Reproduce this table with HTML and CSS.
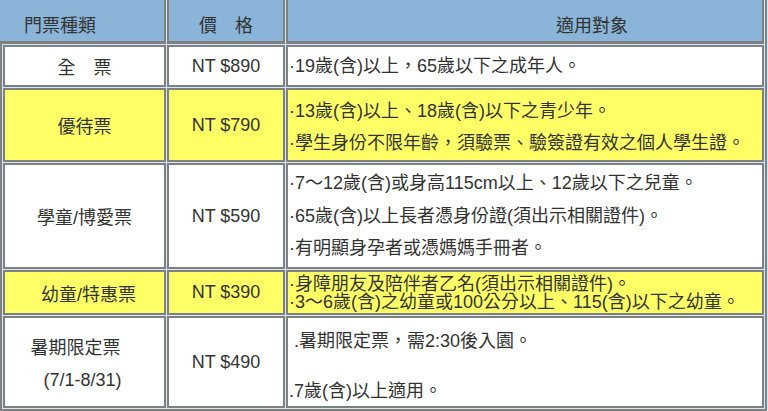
FILE: index.html
```html
<!DOCTYPE html>
<html lang="zh-Hant">
<head>
<meta charset="utf-8">
<title>門票種類</title>
<link rel="stylesheet" href="styles.css">
</head>
<body>
<div class="sheet">
  <div class="head">
    <div class="hc hc1">門票種類</div>
    <div class="hc hc2">價　格</div>
    <div class="hc hc3">適用對象</div>
  </div>
  <div class="rows">
    <div class="c c1">全　票</div>
    <div class="c c2">NT $890</div>
    <div class="c c3 r1"><div>·19歲(含)以上，65歲以下之成年人。</div></div>

    <div class="c c1 y">優待票</div>
    <div class="c c2 y">NT $790</div>
    <div class="c c3 y r2">
      <div>·13歲(含)以上、18歲(含)以下之青少年。</div>
      <div>·學生身份不限年齡，須驗票、驗簽證有效之個人學生證。</div>
    </div>

    <div class="c c1">學童/博愛票</div>
    <div class="c c2">NT $590</div>
    <div class="c c3 r3">
      <div>·7～12歲(含)或身高115cm以上、12歲以下之兒童。</div>
      <div>·65歲(含)以上長者憑身份證(須出示相關證件)。</div>
      <div>·有明顯身孕者或憑媽媽手冊者。</div>
    </div>

    <div class="c c1 y shift-r">幼童/特惠票</div>
    <div class="c c2 y">NT $390</div>
    <div class="c c3 y r4">
      <div>·身障朋友及陪伴者乙名(須出示相關證件)。</div>
      <div>·3～6歲(含)之幼童或100公分以上、115(含)以下之幼童。</div>
    </div>

    <div class="c c1 r5a">
      <div class="l-a">暑期限定票</div>
      <div class="l-b">(7/1-8/31)</div>
    </div>
    <div class="c c2">NT $490</div>
    <div class="c c3 r5">
      <div class="pre"> .暑期限定票，需2:30後入園。</div>
      <div>&nbsp;</div>
      <div>.7歲(含)以上適用。</div>
    </div>
  </div>
</div>
</body>
</html>
```
FILE: styles.css
```css
html, body {
  margin: 0;
  padding: 0;
}
body {
  background: #d2e9f9;
  font-family: "Liberation Sans", "Noto Sans CJK TC", sans-serif;
  font-size: 18px;
  color: #333333;
  overflow: hidden;
}
.sheet {
  width: 767px;
  height: 411px;
  box-sizing: border-box;
  border-right: 2px solid #808080;
}
.head {
  display: grid;
  grid-template-columns: 166px 118px 478px;
  column-gap: 1px;
  height: 44px;
}
.hc {
  background: #8ab5d9;
  border-bottom: 3px solid #808080;
  box-sizing: border-box;
  display: flex;
  align-items: center;
  padding-top: 6px;
  white-space: nowrap;
}
.hc1 {
  border-right: 2px solid #808080;
  padding-left: 24px;
}
.hc2, .hc3 {
  border-left: 2px solid #808080;
  border-right: 2px solid #808080;
}
.hc2 {
  justify-content: center;
}
.hc3 {
  padding-left: 268px;
}
.rows {
  display: grid;
  grid-template-columns: 163px 118px 478px;
  grid-template-rows: 42px 74px 106px 45px 92px;
  gap: 1px;
  padding: 1px;
  border-left: 2px solid #808080;
  border-bottom: 2px solid #808080;
}
.c {
  border: 2px solid #808080;
  background: #ffffff;
  display: flex;
  flex-direction: column;
  justify-content: center;
  white-space: nowrap;
  min-width: 0;
}
.c.y {
  background: #ffff66;
}
.c1, .c2 {
  align-items: center;
  text-align: center;
}
.c3 {
  padding-left: 1px;
  align-items: flex-start;
}
.r1 { line-height: 22px; }
.r2 { line-height: 32px; padding-top: 3px; }
.r3 { line-height: 32.5px; }
.r4 { line-height: 18px; }
.r5 { line-height: 25px; padding-top: 8px; }
.pre { white-space: pre; }
.shift-r { padding-left: 8px; }
.r5a { line-height: 32px; padding-top: 3px; }
.l-a { padding-right: 18px; }
.l-b { padding-right: 4px; }
```
